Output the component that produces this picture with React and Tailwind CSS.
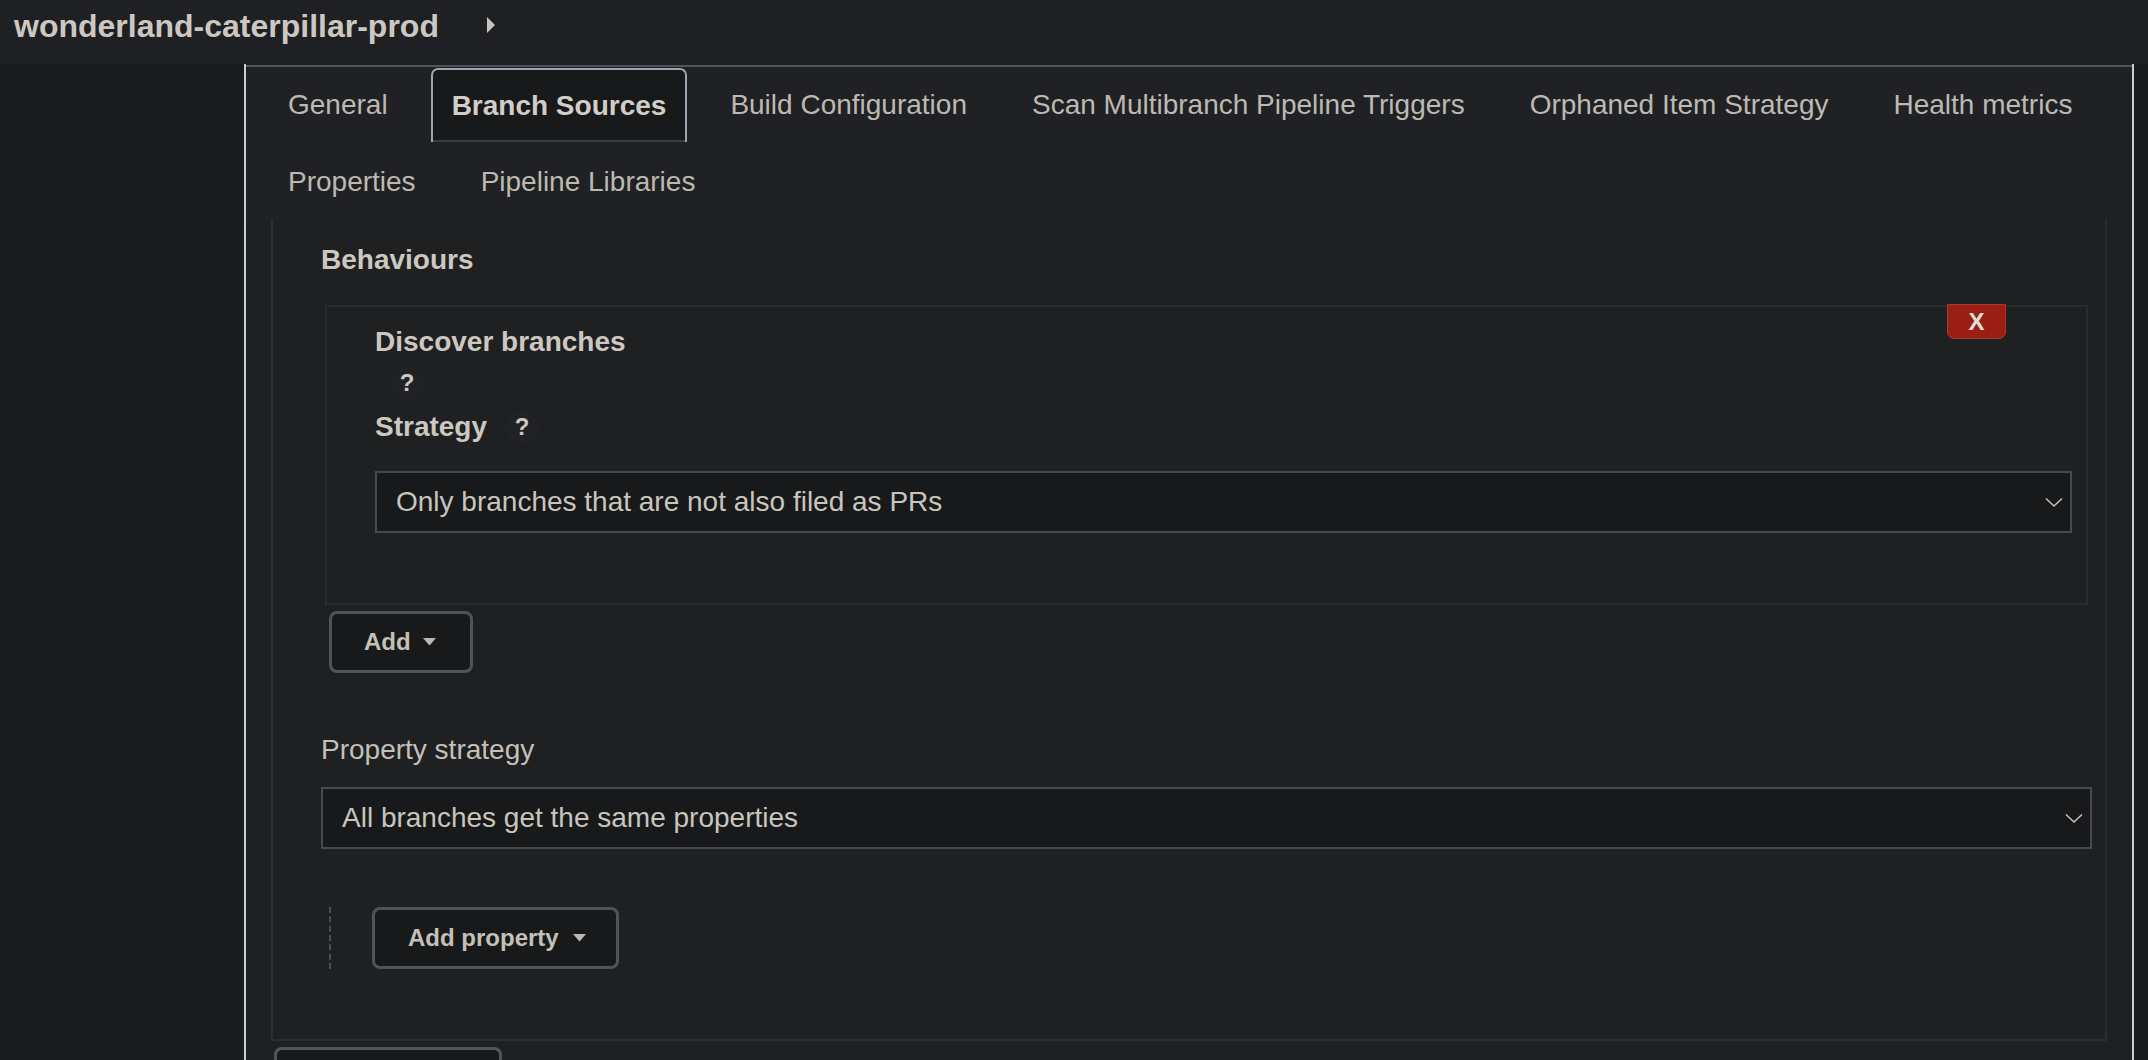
import React from 'react';

const TABS_ROW1 = [
  'General',
  'Branch Sources',
  'Build Configuration',
  'Scan Multibranch Pipeline Triggers',
  'Orphaned Item Strategy',
  'Health metrics',
];
const TABS_ROW2 = ['Properties', 'Pipeline Libraries'];

function Caret() {
  return (
    <svg width="13" height="8" viewBox="0 0 13 8" className="shrink-0">
      <polygon points="0,0 13,0 6.5,7.5" fill="#bdb9b1" />
    </svg>
  );
}

function Chevron() {
  return (
    <svg width="18" height="11" viewBox="0 0 18 11" className="shrink-0">
      <polyline points="1,1.5 9,9 17,1.5" fill="none" stroke="#c4c0b8" strokeWidth="1.6" />
    </svg>
  );
}

function Help() {
  return (
    <span className="inline-flex h-[34px] w-[34px] items-center justify-center rounded-full bg-[#212225] text-[24px] font-bold text-[#ccc8c0]">
      ?
    </span>
  );
}

function Select({ value }) {
  return (
    <div className="flex h-[62px] items-center justify-between border-2 border-[#48494d] bg-[#18191b] pl-[19px] pr-[7px]">
      <span className="text-[28px] text-[#c9c5bd]">{value}</span>
      <Chevron />
    </div>
  );
}

function Tab({ label, active }) {
  if (active) {
    return (
      <div className="flex h-[74px] items-center rounded-t-[7px] border-2 border-b-0 border-[#9aa6b0] bg-[#18191b] px-[19px] shadow-[inset_0_-2px_0_#3a3d41]">
        <span className="text-[28px] font-bold text-[#d2cec7]">{label}</span>
      </div>
    );
  }
  return (
    <div className="flex h-[74px] items-center px-[22px]">
      <span className="text-[28px] text-[#bdb9b1]">{label}</span>
    </div>
  );
}

export default function App() {
  return (
    <div className="min-h-screen overflow-hidden bg-[#1a1b1d] font-['Liberation_Sans',Arial,sans-serif]">
      {/* top bar */}
      <header className="flex h-[64px] items-center bg-[#1f2023] pb-[13px] pl-[14px]">
        <span className="text-[32px] font-bold leading-none text-[#ccc8c1]">wonderland-caterpillar-prod</span>
        <svg width="8" height="16" viewBox="0 0 8 16" className="ml-[48px] mt-[-2px]">
          <polygon points="0,0 8,8 0,16" fill="#c8c4bc" />
        </svg>
      </header>

      <div className="flex">
        <aside className="w-[244px] shrink-0" />

        <main className="h-[996px] w-[1890px] shrink-0 border-x-2 border-[#c9ced3] bg-[#1f2022]">
          {/* tabs */}
          <div className="mt-[1px] border-t-2 border-[#50555b] bg-[#202124] pl-[20px] pt-[1px]">
            <div className="flex gap-x-[21px]">
              {TABS_ROW1.map((t) => (
                <Tab key={t} label={t} active={t === 'Branch Sources'} />
              ))}
            </div>
            <div className="mt-[3px] flex gap-x-[21px]">
              {TABS_ROW2.map((t) => (
                <Tab key={t} label={t} />
              ))}
            </div>
          </div>

          {/* section body */}
          <div className="mx-[25px] border-x-2 border-b-2 border-[#2a2c2f] pb-[70px] pl-[48px] pr-[13px] pt-[20px]">
            <div className="text-[28px] font-bold leading-[42px] text-[#ccc8c0]">Behaviours</div>

            <div className="relative mx-[4px] mt-[24px] border-2 border-[#2a2c2f] pb-[70px] pl-[48px] pr-[14px] pt-[14px]">
              <button className="absolute right-[80px] top-[-3px] flex h-[35px] w-[59px] items-center justify-center rounded-b-[7px] border border-[#b2382c] bg-[#9b1e14] text-[24px] font-bold text-[#e2ded7]">
                X
              </button>
              <div className="text-[28px] font-bold leading-[42px] text-[#ccc8c0]">Discover branches</div>
              <div className="mt-[3px] pl-[15px]">
                <Help />
              </div>
              <div className="mt-[6px] flex h-[42px] items-center">
                <span className="text-[28px] font-bold text-[#ccc8c0]">Strategy</span>
                <span className="ml-[18px]">
                  <Help />
                </span>
              </div>
              <div className="mt-[23px]">
                <Select value="Only branches that are not also filed as PRs" />
              </div>
            </div>

            <button className="ml-[8px] mt-[6px] flex h-[62px] items-center gap-[12px] rounded-[8px] border-[3px] border-[#4f545a] bg-[#18191b] pl-[32px] pr-[34px]">
              <span className="text-[24px] font-bold text-[#c4c0b8]">Add</span>
              <Caret />
            </button>

            <div className="mt-[56px] text-[28px] leading-[42px] text-[#c4c0b8]">Property strategy</div>
            <div className="mt-[16px]">
              <Select value="All branches get the same properties" />
            </div>

            <div className="mt-[58px] flex h-[62px] items-stretch">
              <div className="ml-[8px] w-0 border-l-2 border-dashed border-[#4a4d52]" />
              <button className="ml-[41px] flex items-center gap-[14px] rounded-[8px] border-[3px] border-[#4f545a] bg-[#18191b] pl-[33px] pr-[30px]">
                <span className="text-[24px] font-bold text-[#c4c0b8]">Add property</span>
                <Caret />
              </button>
            </div>
          </div>

          <div className="ml-[28px] mt-[6px] h-[40px] w-[228px] rounded-t-[8px] border-[3px] border-b-0 border-[#50555b] bg-[#18191b]" />
        </main>
      </div>
    </div>
  );
}
